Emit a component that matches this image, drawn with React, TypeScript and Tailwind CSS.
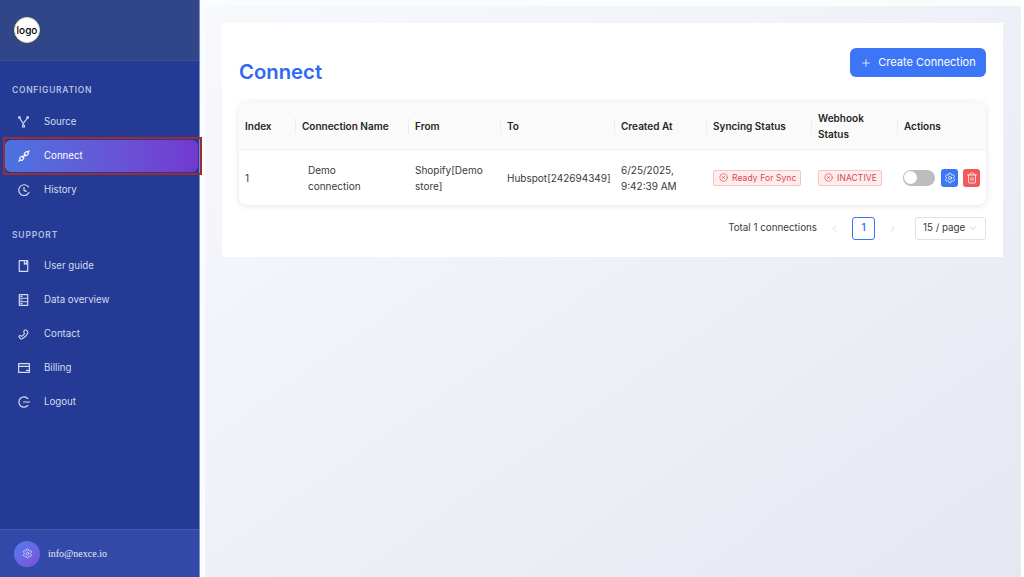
import React from "react";
import { Settings, Trash2, Plus, ChevronLeft, ChevronRight, ChevronDown, CircleX } from "lucide-react";

const S = { fill: "none", stroke: "currentColor", strokeWidth: 1.4, strokeLinecap: "round" as const, strokeLinejoin: "round" as const };

const Source = () => (
  <svg width="11" height="12" viewBox="0 0 14 15" {...S}>
    <circle cx="1.800" cy="1.800" r="1.100" /><circle cx="12.200" cy="1.800" r="1.100" /><circle cx="7" cy="12.800" r="1.400" />
    <path d="M2.400 2.900 C3.500 6 6.500 7 7 11.400 M11.600 2.900 C11 5 8.500 6 7.500 8.500" />
  </svg>
);
const Link = () => (
  <svg width="12" height="12" viewBox="0 0 14 14" {...S}>
    <path d="M7.800 3.700 9.200 2.300a1.900 1.900 0 0 1 2.600 2.600l-1.400 1.400a1.900 1.900 0 0 1-2.600 0 1.900 1.900 0 0 1 0-2.600Z" />
    <path d="M3.700 7.800 2.300 9.200a1.900 1.900 0 0 0 2.600 2.600l1.400-1.400a1.900 1.900 0 0 0 0-2.600 1.900 1.900 0 0 0-2.600 0Z" />
    <path d="M5.400 8.600 8.600 5.400M12 2l1.200-1M.9 13l1.100-1" />
  </svg>
);
const History = () => (
  <svg width="12" height="12" viewBox="0 0 14 14" {...S}>
    <path d="M12.300 3.500A6.300 6.300 0 1 0 12.800 10" /><path d="M7 4v3.400l2.600 1.200" />
  </svg>
);
const Guide = () => (
  <svg width="11" height="12" viewBox="0 0 13 14" {...S}>
    <path d="M1.500.7h10v12.600h-10Z" /><path d="M7.500.7v4.300l1.600-1.100 1.200 1.100V.7" />
  </svg>
);
const Data = () => (
  <svg width="11" height="12" viewBox="0 0 13 14" {...S}>
    <path d="M1.500.7h10v12.600h-10ZM1.500 4.900h10M1.500 9.100h10M3.500 2.800h1.200M3.500 7h1.200M3.500 11.200h1.200" />
  </svg>
);
const Phone = () => (
  <svg width="11" height="11" viewBox="0 0 14 14" {...S}>
    <path d="M8.700 1.500c.7-.7 1.300-.7 2 0l1.600 1.700c.6.6.6 1.200.2 2C11 8.600 8.500 11.100 5.200 12.500c-.8.400-1.400.400-2-.2L1.600 10.700c-.7-.7-.7-1.300 0-2 .6-.6 1.200-.6 1.900-.1l1 .8c1.700-.9 3-2.300 3.900-3.900l-.8-1c-.5-.7-.5-1.300.1-2Z" />
  </svg>
);
const Card = () => (
  <svg width="12" height="12" viewBox="0 0 14 14" {...S}>
    <path d="M.7 2h12.600v10H.7ZM.7 5.200h12.600M10 9.800h2" />
  </svg>
);
const Logout = () => (
  <svg width="12" height="12" viewBox="0 0 14 14" {...S}>
    <path d="M11.500 3A6 6 0 1 0 11.500 11" /><path d="M6.500 7h7" />
  </svg>
);

function Item({ icon, label, active }: { icon: React.ReactNode; label: string; active?: boolean }) {
  return (
    <div className={`flex h-[32px] items-center rounded-md pl-[13px] text-[9.700px] ${active ? "mr-[1px] ml-[5px] bg-linear-to-r from-[#4a73e0] to-[#7338cf] text-white" : "mx-[5px] text-[#d5dcf2]"}`}>
      <span className="flex w-[26px] shrink-0 items-center">{icon}</span>
      <span>{label}</span>
    </div>
  );
}

function Badge({ label, w }: { label: string; w: string }) {
  return (
    <span className={`flex h-[16px] items-center gap-[4px] rounded-[2px] border border-[#f6c2c2] bg-[#fdeded] pl-[5px] text-[8.500px] tracking-[0.1px] whitespace-nowrap text-[#d9484f] ${w}`}>
      <CircleX size={9} strokeWidth={1.7} />
      {label}
    </span>
  );
}

const cols = ["w-[57px]", "w-[113px]", "w-[92px]", "w-[114px]", "w-[92px]", "w-[105px]", "w-[86px]", "flex-1"];
const heads = ["Index", "Connection Name", "From", "To", "Created At", "Syncing Status", "Webhook Status", "Actions"];

export default function App() {
  return (
    <div className="flex h-[577px] w-[1024px] overflow-hidden bg-white font-['Inter',sans-serif]">
      <aside className="flex h-full w-[200px] shrink-0 flex-col border-r border-[#7c8fc9] bg-[#243a94]">
        <div className="flex h-[61px] shrink-0 items-center border-b border-[#3b508f] bg-[#314689] pl-[14px]">
          <div className="flex h-[26px] w-[26px] items-center justify-center rounded-full border border-[#dfe0b0] bg-white text-[10px] font-medium text-black">logo</div>
        </div>
        <p className="mt-[24px] mb-[10px] h-[11px] pl-[12px] text-[8.500px] leading-[11px] font-semibold tracking-[0.7px] text-[#b4bfe0]">CONFIGURATION</p>
        <div className="mb-[2px] flex flex-col gap-[2px]">
          <Item icon={<Source />} label="Source" />
          <div className="relative">
            <Item icon={<Link />} label="Connect" active />
            <div className="absolute top-[-3px] left-[3px] h-[38px] w-[199px] border-2 border-[#a02c30]" />
          </div>
          <Item icon={<History />} label="History" />
        </div>
        <p className="mt-[22px] mb-[9px] h-[11px] pl-[12px] text-[8.500px] leading-[11px] font-semibold tracking-[0.8px] text-[#b4bfe0]">SUPPORT</p>
        <div className="flex flex-col gap-[2px]">
          <Item icon={<Guide />} label="User guide" />
          <Item icon={<Data />} label="Data overview" />
          <Item icon={<Phone />} label="Contact" />
          <Item icon={<Card />} label="Billing" />
          <Item icon={<Logout />} label="Logout" />
        </div>
        <div className="mt-auto flex h-[48px] shrink-0 items-center gap-[8px] border-t border-[#4358a8] bg-[#3249a8] pl-[14px]">
          <div className="flex h-[26px] w-[26px] items-center justify-center rounded-full bg-linear-to-br from-[#4f7bf0] to-[#7a50d8] text-[#e4e8fa]">
            <Settings size={11} strokeWidth={1.5} />
          </div>
          <span className="font-['Liberation_Serif',serif] text-[10px] text-[#e6eafa]">info@nexce.io</span>
        </div>
      </aside>

      <main className="h-full w-[821px] shrink-0 bg-[#fbfcfe] pt-[6px] pl-[5px]">
        <div className="h-[571px] w-[816px] bg-linear-to-br from-[#f7f9fd] to-[#e5e8f1] pt-[17px] pl-[17px]">
          <div className="h-[234px] w-[781px] bg-white px-[17px] pt-[25px]">
            <div className="flex h-[54px] items-start justify-between">
              <h1 className="mt-[10px] text-[20.300px] leading-[28px] font-semibold text-[#3068f5]">Connect</h1>
              <button className="flex h-[29px] w-[136px] items-center justify-center gap-[6px] rounded-md bg-[#3c76f6] text-[11px] text-white">
                <Plus size={12} strokeWidth={1.5} />
                Create Connection
              </button>
            </div>
            <div className="rounded-lg bg-white shadow-[0_1px_6px_rgba(30,40,70,0.12)]">
              <div className="flex h-[48px] items-center rounded-t-lg border-b border-[#efefef] bg-[#fafafa] text-[10px] leading-[16px] font-semibold text-[#262626]">
                {heads.map((h, i) => (
                  <div key={h} className={`${cols[i]} flex h-[16px] items-center border-[#ededed] pl-[6px] ${i < 7 ? "border-r" : ""}`}>
                    <span className={i === 6 ? "w-[50px]" : ""}>{h}</span>
                  </div>
                ))}
              </div>
              <div className="flex h-[55px] items-center rounded-b-lg text-[10px] leading-[16px] text-[#3a3a3a]">
                <div className={`${cols[0]} pl-[6px]`}>1</div>
                <div className={`${cols[1]} pl-[12px]`}><p className="w-[70px]">Demo connection</p></div>
                <div className={`${cols[2]} pl-[6px]`}><p className="w-[80px]">Shopify[Demo store]</p></div>
                <div className={`${cols[3]} pl-[6px]`}>Hubspot[242694349]</div>
                <div className={`${cols[4]} pl-[6px]`}><p className="w-[80px]">6/25/2025, 9:42:39 AM</p></div>
                <div className={`${cols[5]} pl-[6px]`}><Badge label="Ready For Sync" w="w-[88px]" /></div>
                <div className={`${cols[6]} pl-[6px]`}><Badge label="INACTIVE" w="w-[64px]" /></div>
                <div className="flex flex-1 items-center pl-[5px]">
                  <span className="flex h-[16px] w-[32px] items-center rounded-full bg-[#bdbdbd] pl-[1px]">
                    <span className="h-[13px] w-[13px] rounded-full bg-white" />
                  </span>
                  <span className="ml-[6px] flex h-[18px] w-[17px] items-center justify-center rounded-[3px] bg-[#3c76f6] text-white"><Settings size={12} strokeWidth={1.5} /></span>
                  <span className="ml-[5px] flex h-[18px] w-[17px] items-center justify-center rounded-[3px] bg-[#f05a5a] text-white"><Trash2 size={12} strokeWidth={1.5} /></span>
                </div>
              </div>
            </div>
            <div className="mt-[11px] flex h-[24px] items-center justify-end text-[9.800px] text-[#3a3a3a]">
              <span>Total 1 connections</span>
              <ChevronLeft size={11} strokeWidth={1.5} className="ml-[12px] text-[#c4c4c4]" />
              <span className="ml-[12px] flex h-[23px] w-[23px] items-center justify-center rounded-[3px] border border-[#3c76f6] font-semibold text-[#3c76f6]">1</span>
              <ChevronRight size={11} strokeWidth={1.5} className="ml-[12px] text-[#c4c4c4]" />
              <span className="ml-[17px] flex h-[23px] w-[71px] items-center justify-between rounded-[3px] border border-[#e2e2e2] pr-[6px] pl-[7px]">
                15 / page
                <ChevronDown size={12} strokeWidth={1.5} className="text-[#bdbdbd]" />
              </span>
            </div>
          </div>
        </div>
      </main>
    </div>
  );
}
